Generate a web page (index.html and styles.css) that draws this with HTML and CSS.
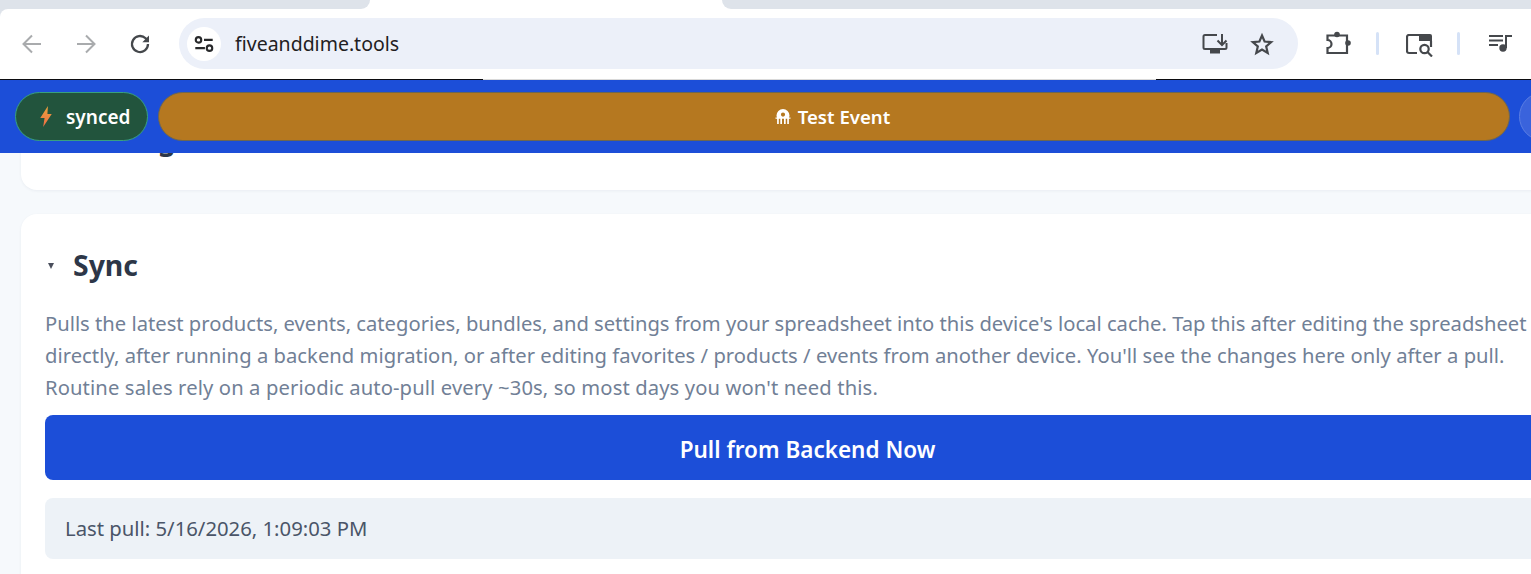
FILE: index.html
```html
<!DOCTYPE html>
<html lang="en">
<head>
<meta charset="utf-8">
<title>fiveanddime.tools</title>
<link rel="stylesheet" href="styles.css">
</head>
<body>
<div class="tabstrip">
  <div class="tab tab-left"></div>
  <div class="tab tab-active"></div>
  <div class="tab tab-right"></div>
</div>
<div class="toolbar-wrap">
<header class="toolbar">
  <div class="nav">
    <svg class="ico dim" viewBox="0 0 24 24"><path d="M21 12H3.500M12 3.500L3.500 12l8.500 8.500"/></svg>
    <svg class="ico dim" viewBox="0 0 24 24"><path d="M3 12h17.500M12 3.500l8.500 8.500-8.500 8.500"/></svg>
    <svg class="ico reload" viewBox="0 0 24 24"><path d="M20 12a8 8 0 1 1-2.400-5.700L20 8.700"/><path class="fill" d="M21 3.500v6.700h-6.700z"/></svg>
  </div>
  <div class="omnibox">
    <span class="site-info">
      <svg class="tune" viewBox="0 0 24 24"><circle cx="6" cy="7.500" r="3"/><path d="M12 7.500H21.500M2.500 16.500H13"/><circle cx="18" cy="16.500" r="3"/></svg>
    </span>
    <span class="url">fiveanddime.tools</span>
    <span class="omni-actions">
      <svg class="ico-install" viewBox="0 0 26 22"><path d="M15 2H3a1.500 1.500 0 0 0-1.500 1.500v11A1.500 1.500 0 0 0 3 16h20a1.500 1.500 0 0 0 1.500-1.500V10"/><path d="M20 1v10.500M15.500 7.500l4.500 4.500 4.500-4.500"/><path class="fill" d="M8 16h10v4.500H8z"/></svg>
      <svg class="ico-star" viewBox="0 0 24 24"><path d="M12 3.500l2.600 6 6.600.6-5 4.400 1.500 6.400-5.700-3.400-5.700 3.400 1.500-6.400-5-4.400 6.600-.6z"/></svg>
    </span>
  </div>
  <div class="tools">
    <svg class="ico-ext" viewBox="0 0 25 25"><path d="M1.500 9V4.500H21V22H1.500v-5a4 4 0 0 0 0-8z"/><circle class="fill" cx="11" cy="3.500" r="2.800"/><circle class="fill" cx="22" cy="12" r="2.800"/></svg>
    <span class="sep"></span>
    <svg class="ico-lens" viewBox="0 0 27 23"><path d="M11 19H3a2 2 0 0 1-2-2V3a2 2 0 0 1 2-2h10"/><path class="fill" d="M13 0h11a2 2 0 0 1 2 2v5H13z"/><path d="M25 7v6"/><circle cx="18.500" cy="15" r="4.200"/><path d="M21.500 18l4.500 4.500"/></svg>
    <span class="sep"></span>
    <svg class="ico-media" viewBox="0 0 24 18"><path d="M1 2h14M1 6.500h14M1 11h9"/><path d="M18 14V2h6"/><circle class="fill" cx="15" cy="14" r="3.700"/></svg>
  </div>
</header>
</div>
<nav class="appbar">
  <div class="pill-synced">
    <svg class="bolt" viewBox="0 0 12 22"><defs><linearGradient id="boltfill" x1="0" y1="0" x2="0" y2="1"><stop offset="0" stop-color="#e8a33c"/><stop offset="1" stop-color="#ef6d45"/></linearGradient></defs><path fill="url(#boltfill)" d="M8 0L0 12.500h4.500L3 22 12 8.500H7.500z"/></svg>
    <span>synced</span>
  </div>
  <div class="pill-event">
    <svg class="jelly" viewBox="0 0 16 15"><path fill-rule="evenodd" d="M8 0a6.500 6.500 0 0 0-6.500 6.500c0 .8.200 1.500.6 2H.5v1.300h1.600V15h1.700v-5.200h1.500V15H7V9.800h2V15h1.700V9.800h1.500V15h1.700V9.800h1.600V8.500h-1.600c.4-.5.6-1.200.6-2A6.500 6.500 0 0 0 8 0zM8 3.500a2.100 2.100 0 1 1 0 4.200 2.100 2.100 0 0 1 0-4.200z"/></svg>
    <span>Test Event</span>
  </div>
  <div class="pill-next"></div>
</nav>
<main class="page">
  <section class="card card-prev"><h2>Testing</h2></section>
  <section class="card card-sync">
    <div class="summary"><span class="marker"></span><h2>Sync</h2></div>
    <p class="desc"><span class="line">Pulls the latest products, events, categories, bundles, and settings from your spreadsheet into this device's local cache. Tap this after editing the spreadsheet</span> <span class="line line-2">directly, after running a backend migration, or after editing favorites / products / events from another device. You'll see the changes here only after a pull.</span> <span class="line line-3">Routine sales rely on a periodic auto-pull every ~30s, so most days you won't need this.</span></p>
    <button class="pull" type="button">Pull from Backend Now</button>
    <div class="status">Last pull: 5/16/2026, 1:09:03 PM</div>
  </section>
</main>
</body>
</html>
```

FILE: styles.css
```css
* { box-sizing: border-box; }
html, body { margin: 0; height: 574px; overflow: hidden; }
body { width: 1531px; background: #f6f9fc; font-family: "Noto Sans", "Open Sans", sans-serif; }
svg { display: block; fill: none; stroke-linecap: butt; }
svg .fill { fill: currentColor; stroke: none; }

.tabstrip { display: flex; height: 9px; background: #fff; }
.tab-left { width: 370px; background: #dee3ea; border-bottom-right-radius: 12px; }
.tab-active { width: 352px; background: #fff; }
.tab-right { flex: 1; background: #dee3ea; border-bottom-left-radius: 12px; }

.toolbar-wrap { background: #dee3ea; }
.toolbar { display: flex; align-items: center; height: 70px; background: #fff; padding: 0 0 1px; border-top-left-radius: 8px; }
.nav { display: flex; align-items: center; gap: 30px; width: 179px; padding-left: 20px; }
.ico { width: 24px; height: 24px; stroke: #45484c; stroke-width: 2; color: #45484c; }
.ico.dim { stroke: #a9abad; }
.ico.reload { stroke-width: 2.300; }
.omnibox { display: flex; align-items: center; width: 1119px; height: 51px; background: #ecf0f9; border-radius: 26px; padding: 0 24px 0 8px; color: #1f2022; }
.site-info { display: flex; align-items: center; justify-content: center; width: 34px; height: 34px; border-radius: 50%; background: #fff; }
.tune { width: 22px; height: 22px; stroke: #28292b; stroke-width: 2.300; }
.url { margin-left: 14px; font-size: 19.500px; line-height: 24px; }
.omni-actions { display: flex; align-items: center; gap: 22px; margin-left: auto; color: #45484c; }
.ico-install { width: 26px; height: 22px; stroke: #45484c; stroke-width: 2; }
.ico-star { width: 24px; height: 24px; stroke: #45484c; stroke-width: 2.200; }
.tools { display: flex; align-items: center; color: #45484c; }
.ico-ext { width: 25px; height: 25px; margin-left: 28px; stroke: #45484c; stroke-width: 2.200; }
.sep { width: 3px; height: 23px; background: #d5e2f7; border-radius: 2px; margin: 0 27px 0 25px; }
.ico-lens { width: 27px; height: 23px; stroke: #45484c; stroke-width: 2.200; margin-top: 3px; }
.ico-lens + .sep { margin: 0 28px 0 24px; }
.ico-media { width: 24px; height: 18px; stroke: #45484c; stroke-width: 2; margin-top: -1px; }

.appbar { position: relative; display: flex; align-items: center; gap: 10px; height: 74px; padding: 0 0 0 15px; background: #1c4ed8; border-top: 1px solid #0c0c10; color: #fff; font-weight: 600; font-size: 19px; }
.appbar::before { content: ""; position: absolute; top: -1px; left: 483px; width: 673px; height: 1px; background: #d9d9d9; }
.pill-synced { display: flex; align-items: center; flex: none; gap: 14px; width: 133px; height: 49px; padding-left: 24px; border-radius: 25px; background: #22543d; border: 1px solid #38a080; }
.bolt { width: 12px; height: 21px; }
.pill-event { display: flex; align-items: center; justify-content: center; gap: 7px; flex: none; width: 1352px; height: 49px; padding-right: 3px; border-radius: 25px; background: #b57820; border: 1px solid #6d6650; font-size: 18.600px; }
.jelly { width: 16px; height: 15px; fill: #fff; }
.pill-next { flex: none; width: 50px; height: 49px; border-radius: 25px; background: #3a63dc; border: 1px solid #5b7ee2; margin-left: -1px; }

.page { height: 421px; padding: 0 0 0 21px; overflow: hidden; }
.card { width: 1573px; background: #fff; border-radius: 16px; box-shadow: 0 1px 3px rgba(30, 50, 80, .06); }
.card-prev { height: 102px; margin-top: -65px; margin-bottom: 24px; padding: 30px 0 0 52px; }
.card-sync { height: 400px; padding: 30px 24px 0; }
.summary { display: flex; align-items: center; height: 42px; }
.marker { width: 0; height: 0; margin: 2px 19px 0 3px; border-left: 3.500px solid transparent; border-right: 3.500px solid transparent; border-top: 6px solid #4a4f5c; }
h2 { margin: 0; font-size: 28.400px; font-weight: 700; line-height: 42px; color: #2d3748; }
.desc { margin: 21px 0 12px; font-size: 20.200px; line-height: 32px; color: #718096; white-space: nowrap; }
.line { display: block; }
.line-2 { letter-spacing: .04px; }
.line-3 { letter-spacing: .125px; }
.pull { display: block; width: 1525px; height: 65px; padding: 3px 0 0; border: 0; border-radius: 8px; background: #1c4ed8; color: #fff; font: 600 22.500px "Noto Sans", "Open Sans", sans-serif; }
.status { width: 1525px; height: 61px; margin-top: 18px; padding: 0 20px; border-radius: 8px; background: #edf2f7; color: #4a5568; font-size: 20.300px; line-height: 61px; }
```
